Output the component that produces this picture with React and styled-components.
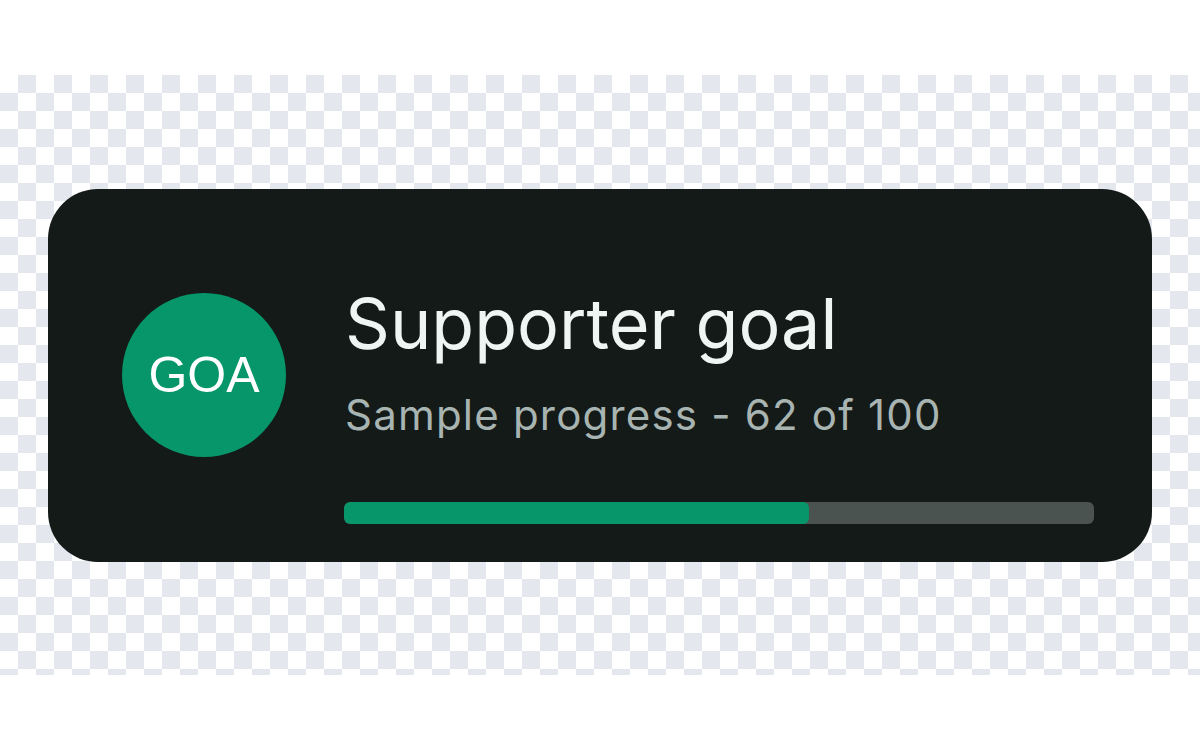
import React from "react";
import styled, { createGlobalStyle } from "styled-components";

const GlobalStyle = createGlobalStyle`
  html, body { margin: 0; padding: 0; background: #ffffff; }
  body { font-family: "Inter", "Liberation Sans", sans-serif; }
`;

const Stage = styled.div`
  margin-top: 75px;
  width: 1200px;
  height: 600px;
  display: flex;
  align-items: center;
  justify-content: center;
  background: repeating-conic-gradient(#e4e7ee 0 25%, #ffffff 0 50%) 0 0 / 36px 36px;
`;

const Card = styled.div`
  box-sizing: border-box;
  width: 1104px;
  height: 373px;
  border-radius: 50px;
  background: #141a18;
  display: flex;
  align-items: center;
  padding: 0 58px 0 74px;
  gap: 58px;
`;

const Avatar = styled.div`
  flex: 0 0 164px;
  width: 164px;
  height: 164px;
  border-radius: 50%;
  background: #069669;
  color: #ffffff;
  display: flex;
  align-items: center;
  justify-content: center;
  font-family: "Liberation Sans", Arial, sans-serif;
  font-size: 50px;
  line-height: 1;
`;

const Content = styled.div`
  flex: 1;
  align-self: stretch;
  box-sizing: border-box;
  display: flex;
  flex-direction: column;
  padding-top: 100px;
`;

const Title = styled.div`
  color: #eef5f2;
  font-size: 70px;
  line-height: 70px;
  font-weight: 400;
  letter-spacing: 0;
  margin-left: 1px;
`;

const Subtitle = styled.div`
  color: #a8b4b1;
  font-size: 42px;
  line-height: 42px;
  letter-spacing: 1.2px;
  margin-top: 35px;
  margin-left: 1px;
`;

const Track = styled.div`
  margin-top: 66px;
  height: 22px;
  border-radius: 6px;
  background: #4b5350;
  overflow: hidden;
  display: flex;
`;

const Fill = styled.div`
  height: 100%;
  border-radius: 6px;
  background: #069669;
`;

export default function App() {
  const value = 62;
  const max = 100;
  return (
    <>
      <GlobalStyle />
      <Stage>
        <Card>
          <Avatar>GOA</Avatar>
          <Content>
            <Title>Supporter goal</Title>
            <Subtitle>Sample progress - {value} of {max}</Subtitle>
            <Track>
              <Fill style={{ width: `${(value / max) * 100}%` }} />
            </Track>
          </Content>
        </Card>
      </Stage>
    </>
  );
}
